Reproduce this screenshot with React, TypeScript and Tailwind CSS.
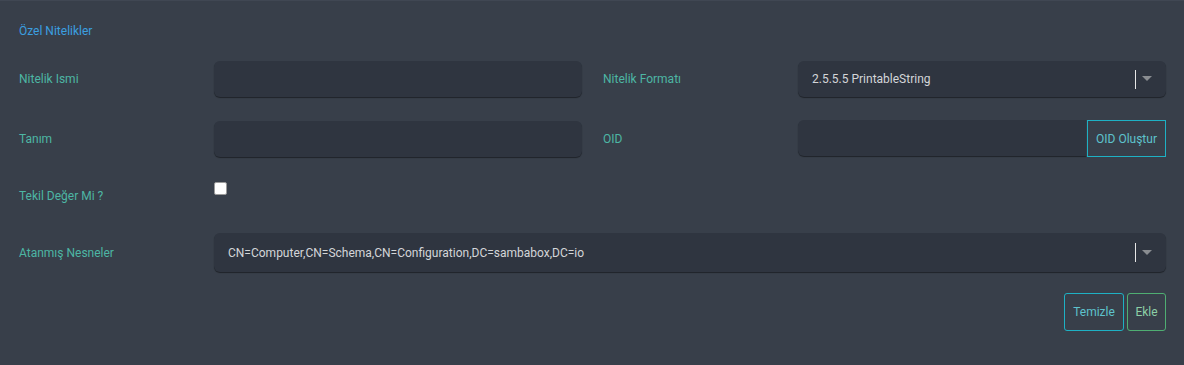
import React from 'react';

const labelCls = "w-[195px] shrink-0 text-[12px] text-[#4db6a4]";
const inputCls = "h-[36px] rounded-[6px] bg-[#2f3540] shadow-[0_1px_1px_rgba(0,0,0,0.45)]";

function SelectBox({ value, className }: { value: string; className: string }) {
  return (
    <div className={`flex items-center rounded-[6px] bg-[#2f3540] pl-[14px] pr-[14px] text-[12px] text-[#d4d6d9] shadow-[0_1px_1px_rgba(0,0,0,0.45)] ${className}`}>
      <span className="flex-1">{value}</span>
      <span className="h-[19px] w-px bg-[#e6e6e6]" />
      <svg width="10" height="6" viewBox="0 0 10 6" className="ml-[6px]">
        <path d="M0 0 L10 0 L5 5 Z" fill="#8a8d91" />
      </svg>
    </div>
  );
}

export default function App() {
  return (
    <div className="h-[365px] w-[1184px] bg-[#383f4a] pl-[19px] pr-[18px] pt-[22px] font-['Roboto',sans-serif] border-t border-[#404753]">
      <p className="h-[16px] text-[12px] leading-[16px] text-[#3b9fe0]">Özel Nitelikler</p>

      {/* Nitelik Ismi / Formatı */}
      <div className="mt-[22px] flex items-center">
        <span className={labelCls}>Nitelik Ismi</span>
        <div className={`w-[368px] ${inputCls}`} />
        <div className="w-[21px]" />
        <span className={labelCls}>Nitelik Formatı</span>
        <SelectBox value="2.5.5.5 PrintableString" className="h-[36px] w-[368px]" />
      </div>

      {/* Tanım / OID */}
      <div className="mt-[23px] flex items-center">
        <span className={labelCls}>Tanım</span>
        <div className={`w-[368px] ${inputCls}`} />
        <div className="w-[21px]" />
        <span className={labelCls}>OID</span>
        <div className="flex w-[368px]">
          <div className={`flex-1 rounded-r-none ${inputCls}`} />
          <button className="ml-px h-[37px] w-[79px] border border-[#1eb1c4] text-[12px] text-[#5ec3cd]">
            OID Oluştur
          </button>
        </div>
      </div>

      {/* Tekil */}
      <div className="mt-[20px] flex h-[36px] items-center">
        <span className={`${labelCls} pt-[1px]`}>Tekil Değer Mi ?</span>
        <div className="self-start pt-[5px]">
          <div className="h-[13px] w-[13px] rounded-[2px] border border-[#9a9a9a] bg-white" />
        </div>
      </div>

      {/* Atanmış Nesneler */}
      <div className="mt-[20px] flex items-center">
        <span className={labelCls}>Atanmış Nesneler</span>
        <SelectBox value="CN=Computer,CN=Schema,CN=Configuration,DC=sambabox,DC=io" className="h-[39px] flex-1" />
      </div>

      <div className="mt-[21px] flex justify-end gap-[3px]">
        <button className="h-[38px] w-[60px] rounded-[3px] border border-[#1eb1c4] text-[12px] text-[#5ec3cd]">Temizle</button>
        <button className="h-[38px] w-[39px] rounded-[3px] border border-[#4fae72] text-[12px] text-[#8ccfa6]">Ekle</button>
      </div>
    </div>
  );
}
